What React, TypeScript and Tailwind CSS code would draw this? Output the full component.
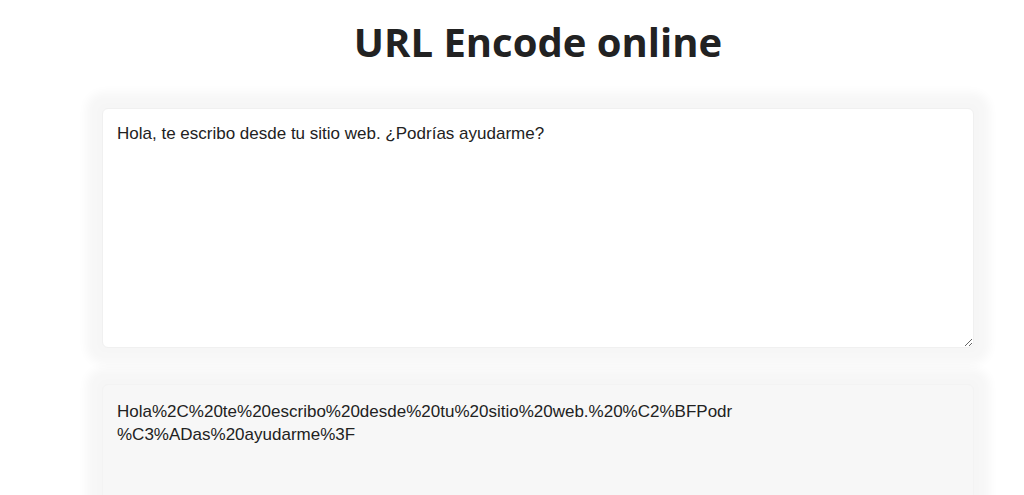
import { useState } from 'react'

const input = 'Hola, te escribo desde tu sitio web. ¿Podrías ayudarme?'

// the page wraps the encoded string right after "Podr"
function wrapEncoded(s: string) {
  const i = s.indexOf('%C3%AD')
  return i > 0 ? s.slice(0, i) + '\n' + s.slice(i) : s
}

export default function App() {
  const [text, setText] = useState(input)
  const encoded = wrapEncoded(encodeURIComponent(text))

  return (
    <div className="min-h-screen overflow-hidden bg-white font-['Liberation_Sans',Arial,sans-serif] text-[#222]">
      <div className="ml-[102px] w-[872px] pt-[22px]">
        <h1 className="text-center font-['Open_Sans',sans-serif] text-[40px] font-bold leading-[40px] text-[#222]">
          URL Encode online
        </h1>

        <div className="mt-[46px] flex flex-col gap-[36px]">
          <textarea
            value={text}
            onChange={(e) => setText(e.target.value)}
            spellCheck={false}
            className="block h-[240px] w-full resize-y rounded-[6px] border border-[#f0f0f0] bg-white px-[14px] py-[13px] text-[17px] leading-[23px] text-[#222] shadow-[0_0_10px_16px_rgba(0,0,0,0.035)] outline-none"
          />
          <textarea
            value={encoded}
            readOnly
            spellCheck={false}
            className="block h-[240px] w-full resize-none rounded-[6px] border border-[#f3f3f3] bg-[#f7f7f7] px-[14px] py-[15px] text-[17px] leading-[23px] text-[#222] shadow-[0_0_10px_16px_rgba(0,0,0,0.035)] outline-none"
          />
        </div>
      </div>
    </div>
  )
}
